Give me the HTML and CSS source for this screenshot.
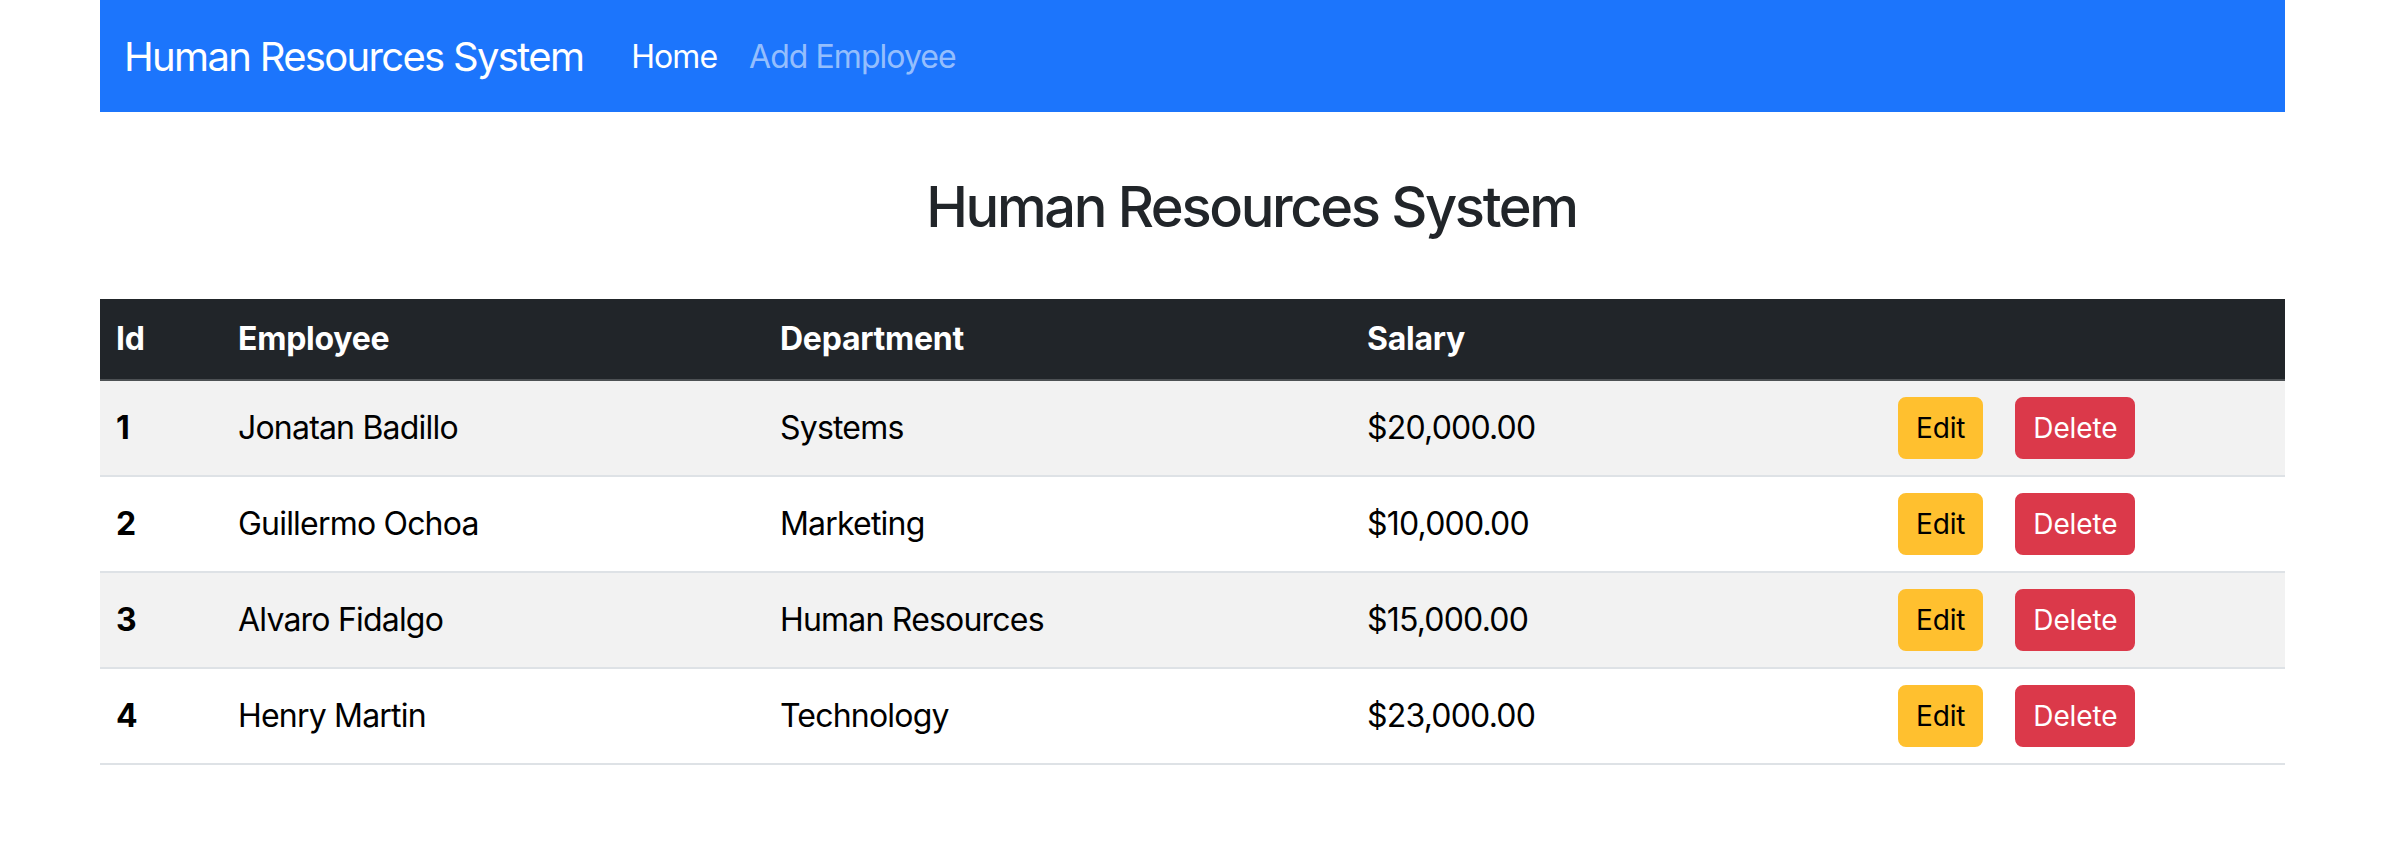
FILE: index.html
```html
<!DOCTYPE html>
<html lang="en">
<head>
<meta charset="utf-8">
<title>Human Resources System</title>
<link rel="stylesheet" href="styles.css">
</head>
<body>
<div class="page">
  <nav class="navbar">
    <a class="brand" href="#">Human Resources System</a>
    <ul class="nav">
      <li><a class="nav-link active" href="#">Home</a></li>
      <li><a class="nav-link" href="#">Add Employee</a></li>
    </ul>
  </nav>

  <h3 class="title">Human Resources System</h3>

  <table class="table">
    <colgroup>
      <col class="c-id">
      <col class="c-emp">
      <col class="c-dep">
      <col class="c-sal">
      <col class="c-act">
    </colgroup>
    <thead>
      <tr>
        <th>Id</th>
        <th>Employee</th>
        <th>Department</th>
        <th>Salary</th>
        <th></th>
      </tr>
    </thead>
    <tbody>
      <tr class="odd">
        <th>1</th>
        <td>Jonatan Badillo</td>
        <td>Systems</td>
        <td>$20,000.00</td>
        <td><div class="actions"><a class="btn btn-warning" href="#">Edit</a><a class="btn btn-danger" href="#">Delete</a></div></td>
      </tr>
      <tr>
        <th>2</th>
        <td>Guillermo Ochoa</td>
        <td>Marketing</td>
        <td>$10,000.00</td>
        <td><div class="actions"><a class="btn btn-warning" href="#">Edit</a><a class="btn btn-danger" href="#">Delete</a></div></td>
      </tr>
      <tr class="odd">
        <th>3</th>
        <td>Alvaro Fidalgo</td>
        <td>Human Resources</td>
        <td>$15,000.00</td>
        <td><div class="actions"><a class="btn btn-warning" href="#">Edit</a><a class="btn btn-danger" href="#">Delete</a></div></td>
      </tr>
      <tr>
        <th>4</th>
        <td>Henry Martin</td>
        <td>Technology</td>
        <td>$23,000.00</td>
        <td><div class="actions"><a class="btn btn-warning" href="#">Edit</a><a class="btn btn-danger" href="#">Delete</a></div></td>
      </tr>
    </tbody>
  </table>
</div>
</body>
</html>
```

FILE: styles.css
```css
* { box-sizing: border-box; }

html, body {
  margin: 0;
  padding: 0;
  background: #fff;
}

body {
  font-family: Inter, "Liberation Sans", Arial, sans-serif;
  font-size: 32px;
  line-height: 48px;
  color: #212529;
}

.page {
  padding: 0 111px 0 100px;
}

.navbar {
  display: flex;
  align-items: center;
  height: 112px;
  padding: 2px 24px 0 24px;
  background: #1c75fc;
}

.brand {
  font-size: 40px;
  line-height: 60px;
  letter-spacing: -0.042em;
  color: #fff;
  text-decoration: none;
  margin-right: 32px;
}

.nav {
  display: flex;
  list-style: none;
  margin: 0;
  padding: 0;
}

.nav-link {
  display: block;
  padding: 16px;
  font-size: 32px;
  line-height: 48px;
  letter-spacing: -0.03em;
  color: rgba(255, 255, 255, 0.55);
  text-decoration: none;
}

.nav-link.active {
  color: #fff;
}

.title {
  margin: 62px 0 0 0;
  padding-left: 118px;
  text-align: center;
  font-size: 56px;
  line-height: 67px;
  font-weight: 500;
  letter-spacing: -0.042em;
  color: #212529;
}

.table {
  width: 100%;
  margin-top: 58px;
  border-collapse: collapse;
  table-layout: fixed;
  color: #000;
}

.c-id { width: 122px; }
.c-emp { width: 542px; }
.c-dep { width: 587px; }
.c-sal { width: 531px; }
.c-act { width: 403px; }

.table th,
.table td {
  padding: 16px;
  text-align: left;
  vertical-align: middle;
  border-bottom: 2px solid #dee2e6;
  font-size: 32px;
  line-height: 48px;
  letter-spacing: -0.025em;
}

.table thead th {
  background: #212529;
  color: #fff;
  font-weight: 700;
  letter-spacing: -0.008em;
  border-bottom-color: #4d5154;
}

.table tbody th {
  font-weight: 700;
}

.table tbody tr.odd th,
.table tbody tr.odd td {
  background: #f2f2f2;
}

.actions {
  display: flex;
  gap: 32px;
}

.btn {
  display: inline-block;
  padding: 8px 16px;
  font-size: 28px;
  line-height: 42px;
  letter-spacing: -0.005em;
  border: 2px solid transparent;
  border-radius: 8px;
  text-decoration: none;
}

.btn-warning {
  background: #ffc02f;
  border-color: #ffc02f;
  color: #000;
}

.btn-danger {
  background: #db394a;
  border-color: #db394a;
  color: #fff;
}
```
